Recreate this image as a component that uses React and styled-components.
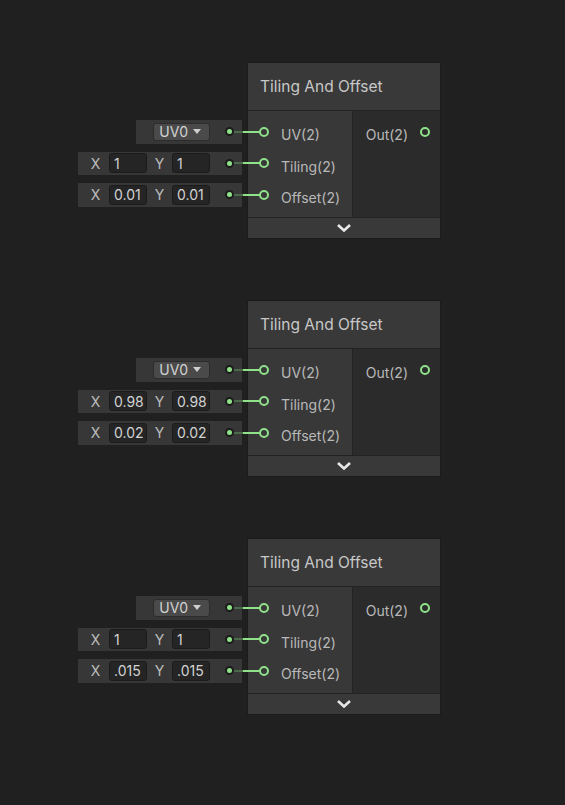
import React from "react";
import styled, { createGlobalStyle } from "styled-components";

const GlobalStyle = createGlobalStyle`
  html, body {
    margin: 0;
    padding: 0;
    background: #202020;
  }
  body {
    font-family: Inter, "Noto Sans", "Liberation Sans", sans-serif;
    -webkit-font-smoothing: antialiased;
  }
`;

const GREEN = "#8fe28a";

// [Canvas]
const Canvas = styled.main`
  display: flex;
  flex-direction: column;
  gap: 63px;
  padding: 63px 0 0 72px;
  width: 565px;
  height: 805px;
  box-sizing: border-box;
  background: #202020;
`;

const NodeRow = styled.div`
  display: flex;
  flex-direction: row;
  align-items: flex-start;
  gap: 6px;
`;

// [Inline fields]
const FieldColumn = styled.div`
  display: flex;
  flex-direction: column;
  align-items: flex-end;
  gap: 8px;
  padding-top: 57px;
  width: 170px;
`;

const FieldRow = styled.div`
  display: flex;
  flex-direction: row;
  align-items: center;
  height: 23.5px;
  padding-left: ${(p) => (p.$wide ? "4px" : "17px")};
  background: #373737;
  box-sizing: border-box;
`;

const AxisLabel = styled.span`
  width: ${(p) => p.$w}px;
  text-align: center;
  color: #bcbcbc;
  font-size: 14px;
`;

const NumberBox = styled.div`
  display: flex;
  align-items: center;
  width: 38px;
  height: 20px;
  padding-left: 4px;
  box-sizing: border-box;
  border: 1px solid #1b1b1b;
  border-radius: 3px;
  background: #252525;
  color: #d2d2d2;
  font-size: 14px;
`;

const Dropdown = styled.div`
  display: flex;
  align-items: center;
  gap: 5px;
  height: 18px;
  padding: 0 8px 0 5px;
  box-sizing: border-box;
  border: 1px solid #2c2c2c;
  border-radius: 3px;
  background: #4a4a4a;
  color: #d2d2d2;
  font-size: 14px;
`;

const Caret = styled.span`
  width: 0;
  height: 0;
  border-left: 4.5px solid transparent;
  border-right: 4.5px solid transparent;
  border-top: 5px solid #cfcfcf;
`;

const DotSlot = styled.div`
  position: relative;
  display: flex;
  align-items: center;
  justify-content: center;
  width: 9px;
  height: 9px;
  margin: 0 8.5px 0 14.5px;
  border-radius: 50%;
  background: #1c1c1c;
`;

const Dot = styled.span`
  width: 5px;
  height: 5px;
  border-radius: 50%;
  background: ${GREEN};
`;

// edge drawn from the field dot to the node port
const Wire = styled.span`
  position: absolute;
  left: 9px;
  top: 3.5px;
  width: 26px;
  height: 2px;
  background: linear-gradient(
    to right,
    #4b6a49 0,
    #4b6a49 9.5px,
    ${GREEN} 9.5px,
    ${GREEN} 100%
  );
`;

// [Node]
const Node = styled.section`
  display: flex;
  flex-direction: column;
  width: 192px;
  background: #232323;
  box-shadow: 0 0 0 1px #1b1b1b;
`;

const Header = styled.header`
  display: flex;
  align-items: center;
  height: 47px;
  padding-left: 12px;
  background: #393939;
  color: #c8c8c8;
  font-size: 15.5px;
`;

const Body = styled.div`
  display: flex;
  flex-direction: row;
  gap: 1px;
  margin-top: 1px;
  height: 106px;
`;

const InputCol = styled.div`
  display: flex;
  flex-direction: column;
  padding-top: 5px;
  width: 104px;
  background: #383838;
`;

const OutputCol = styled.div`
  display: flex;
  flex-direction: column;
  padding-top: 5px;
  flex: 1;
  background: #2b2b2b;
`;

const PortRow = styled.div`
  display: flex;
  flex-direction: row;
  align-items: center;
  justify-content: ${(p) => (p.$out ? "flex-end" : "flex-start")};
  gap: 12px;
  height: 31.5px;
  padding: ${(p) => (p.$out ? "0 10px 0 0" : "0 0 0 11px")};
  color: #b9b9b9;
  font-size: 14px;
`;

const PortLabel = styled.span`
  padding-top: 6px;
`;

const Port = styled.span`
  width: 10px;
  height: 10px;
  box-sizing: border-box;
  border: 2px solid ${GREEN};
  border-radius: 50%;
`;

const Footer = styled.footer`
  display: flex;
  align-items: center;
  justify-content: center;
  height: 20px;
  margin-top: 1px;
  background: #393939;
`;

function Chevron() {
  return (
    <svg width="16" height="10" viewBox="0 0 16 10">
      <polyline
        points="2,2 8,7.5 14,2"
        fill="none"
        stroke="#e8e8e8"
        strokeWidth="2.6"
      />
    </svg>
  );
}

function Connector() {
  return (
    <DotSlot>
      <Dot />
      <Wire />
    </DotSlot>
  );
}

function VectorField({ x, y }) {
  return (
    <FieldRow $wide>
      <AxisLabel $w={27}>X</AxisLabel>
      <NumberBox>{x}</NumberBox>
      <AxisLabel $w={25}>Y</AxisLabel>
      <NumberBox>{y}</NumberBox>
      <Connector />
    </FieldRow>
  );
}

function TilingNode({ tiling, offset }) {
  return (
    <NodeRow>
      <FieldColumn>
        <FieldRow>
          <Dropdown>
            UV0
            <Caret />
          </Dropdown>
          <Connector />
        </FieldRow>
        <VectorField x={tiling[0]} y={tiling[1]} />
        <VectorField x={offset[0]} y={offset[1]} />
      </FieldColumn>
      <Node>
        <Header>Tiling And Offset</Header>
        <Body>
          <InputCol>
            <PortRow>
              <Port />
              <PortLabel>UV(2)</PortLabel>
            </PortRow>
            <PortRow>
              <Port />
              <PortLabel>Tiling(2)</PortLabel>
            </PortRow>
            <PortRow>
              <Port />
              <PortLabel>Offset(2)</PortLabel>
            </PortRow>
          </InputCol>
          <OutputCol>
            <PortRow $out>
              <PortLabel>Out(2)</PortLabel>
              <Port />
            </PortRow>
          </OutputCol>
        </Body>
        <Footer>
          <Chevron />
        </Footer>
      </Node>
    </NodeRow>
  );
}

export default function App() {
  return (
    <>
      <GlobalStyle />
      <Canvas>
        <TilingNode tiling={["1", "1"]} offset={["0.01", "0.01"]} />
        <TilingNode tiling={["0.98", "0.98"]} offset={["0.02", "0.02"]} />
        <TilingNode tiling={["1", "1"]} offset={[".015", ".015"]} />
      </Canvas>
    </>
  );
}
